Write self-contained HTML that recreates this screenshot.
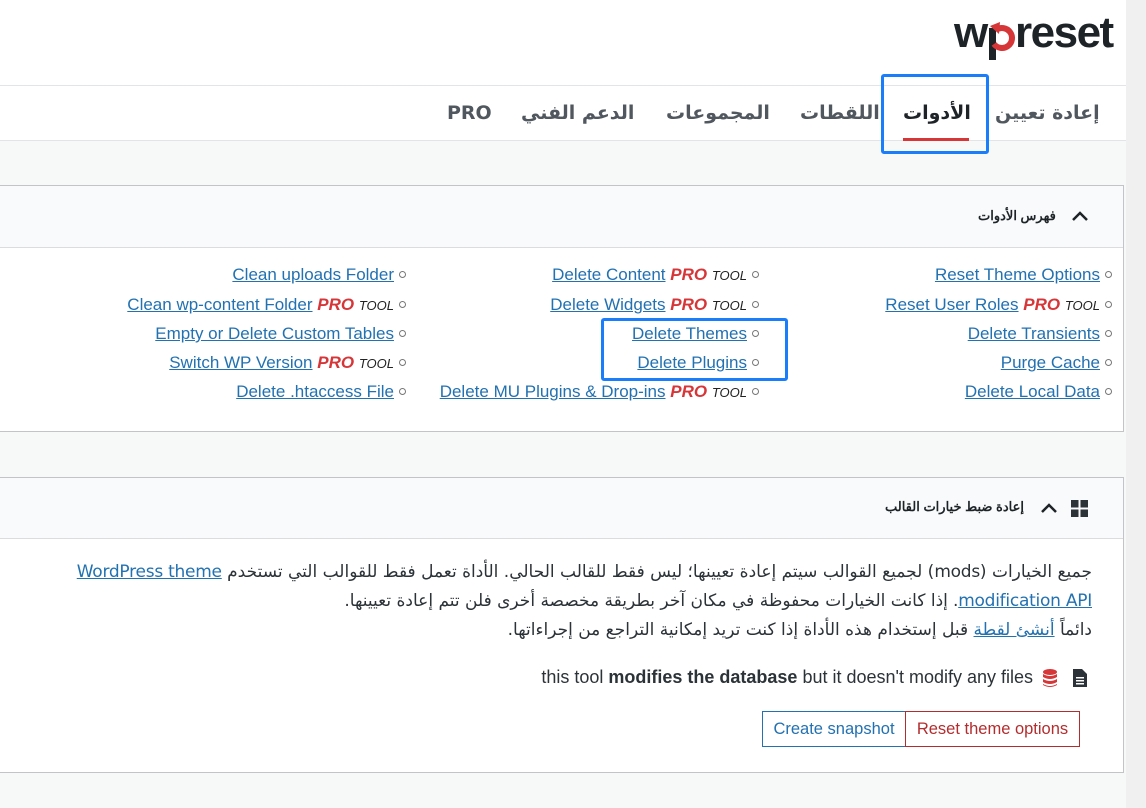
<!DOCTYPE html>
<html><head><meta charset="utf-8">
<style>
*{margin:0;padding:0;box-sizing:border-box}
body{width:1146px;height:808px;position:relative;overflow:hidden;background:#f7f8f8;font-family:"Liberation Sans","Noto Sans CJK SC",sans-serif;color:#2c3338}
.abs{position:absolute}
a{color:#2271b1;text-decoration:underline}
.strip{left:1126px;top:0;width:20px;height:808px;background:#f0f0f1}
.head{left:0;top:0;width:1126px;height:85px;background:#fff}
.tabs{left:0;top:85px;width:1126px;height:56px;background:#fff;border-top:1px solid #e2e4e7;border-bottom:1px solid #e2e4e7}
.tab{position:absolute;top:102px;font-size:19px;font-weight:bold;color:#50575e;white-space:nowrap;font-family:"DejaVu Sans","Liberation Sans",sans-serif}
.panel{left:0;width:1124px;background:#fff;border:1px solid #c3c4c7;border-left:none}
.ph{position:absolute;left:0;top:0;right:0;background:#f9fafb;border-bottom:1px solid #dcdcde}
.row{position:absolute;font-size:17px;white-space:nowrap;text-align:right;line-height:20px}
.row .b{display:inline-block;width:7px;height:7px;border:1px solid #777;border-radius:50%;margin-left:5px;vertical-align:2px}
.pro{color:#d63638;font-weight:bold;font-style:italic;text-decoration:none}
.tool{font-style:italic;font-size:13px;color:#222}
.p{position:absolute;right:54px;font-size:17px;white-space:nowrap;direction:rtl;color:#2c3338;font-family:"DejaVu Sans","Liberation Sans",sans-serif;letter-spacing:-0.25px}
.hl{position:absolute;border:3px solid #1a7efb;border-radius:3px}
.btn{position:absolute;top:711px;height:36px;font-size:16.5px;line-height:34px;text-align:center;background:#fff}
</style></head><body>
<div class="abs strip"></div>
<div class="abs head"></div>
<div class="abs" style="left:954px;top:8px;font-size:44px;font-weight:bold;color:#1d2327;letter-spacing:-1px;line-height:50px">w</div>
<div class="abs" style="left:1015px;top:8px;font-size:44px;font-weight:bold;color:#1d2327;letter-spacing:-1.5px;line-height:50px">reset</div>
<svg class="abs" style="left:986px;top:14px" width="34" height="46" viewBox="0 0 34 46"><rect x="3" y="14" width="7" height="32" fill="#1d2327"/><path d="M8 30 A10 10 0 1 0 10 16" stroke="#d63638" stroke-width="6" fill="none"/><path d="M4 12 L14 8 L13 20 Z" fill="#d63638"/></svg>
<div class="abs tabs"></div>
<div class="tab" style="left:995px">إعادة تعيين</div>
<div class="tab" style="left:903px;color:#1d2327">الأدوات</div>
<div class="abs" style="left:903px;top:138px;width:66px;height:3px;background:#d63638"></div>
<div class="tab" style="left:800px">اللقطات</div>
<div class="tab" style="left:666px">المجموعات</div>
<div class="tab" style="left:521px">الدعم الفني</div>
<div class="tab" style="left:447px">PRO</div>
<div class="hl" style="left:881px;top:74px;width:108px;height:80px"></div>

<div class="abs panel" style="top:185px;height:247px">
 <div class="ph" style="height:62px"></div>
</div>
<div class="abs" style="left:978px;top:208px;font-size:13px;font-weight:bold;color:#1d2327;direction:rtl">فهرس الأدوات</div>
<svg class="abs" style="left:1071px;top:210px" width="18" height="12"><path d="M2 10 L9 3 L16 10" stroke="#1d2327" stroke-width="2.5" fill="none"/></svg>

<div class="row" style="right:34px;top:265px"><a>Reset Theme Options</a><span class="b"></span></div>
<div class="row" style="right:34px;top:295px"><a>Reset User Roles</a> <span class="pro">PRO</span> <span class="tool">TOOL</span><span class="b"></span></div>
<div class="row" style="right:34px;top:324px"><a>Delete Transients</a><span class="b"></span></div>
<div class="row" style="right:34px;top:353px"><a>Purge Cache</a><span class="b"></span></div>
<div class="row" style="right:34px;top:382px"><a>Delete Local Data</a><span class="b"></span></div>

<div class="row" style="right:387px;top:265px"><a>Delete Content</a> <span class="pro">PRO</span> <span class="tool">TOOL</span><span class="b"></span></div>
<div class="row" style="right:387px;top:295px"><a>Delete Widgets</a> <span class="pro">PRO</span> <span class="tool">TOOL</span><span class="b"></span></div>
<div class="row" style="right:387px;top:324px"><a>Delete Themes</a><span class="b"></span></div>
<div class="row" style="right:387px;top:353px"><a>Delete Plugins</a><span class="b"></span></div>
<div class="row" style="right:387px;top:382px"><a>Delete MU Plugins &amp; Drop-ins</a> <span class="pro">PRO</span> <span class="tool">TOOL</span><span class="b"></span></div>

<div class="row" style="right:740px;top:265px"><a>Clean uploads Folder</a><span class="b"></span></div>
<div class="row" style="right:740px;top:295px"><a>Clean wp-content Folder</a> <span class="pro">PRO</span> <span class="tool">TOOL</span><span class="b"></span></div>
<div class="row" style="right:740px;top:324px"><a>Empty or Delete Custom Tables</a><span class="b"></span></div>
<div class="row" style="right:740px;top:353px"><a>Switch WP Version</a> <span class="pro">PRO</span> <span class="tool">TOOL</span><span class="b"></span></div>
<div class="row" style="right:740px;top:382px"><a>Delete .htaccess File</a><span class="b"></span></div>
<div class="hl" style="left:601px;top:318px;width:187px;height:63px"></div>

<div class="abs panel" style="top:477px;height:296px">
 <div class="ph" style="height:61px"></div>
</div>
<div class="abs" style="left:885px;top:499px;font-size:13px;font-weight:bold;color:#1d2327;direction:rtl">إعادة ضبط خيارات القالب</div>
<svg class="abs" style="left:1040px;top:502px" width="18" height="12"><path d="M2 10 L9 3 L16 10" stroke="#1d2327" stroke-width="2.5" fill="none"/></svg>
<svg class="abs" style="left:1071px;top:500px" width="17" height="17"><rect x="0" y="0" width="7.5" height="7.5" fill="#2c3338"/><rect x="9.5" y="0" width="7.5" height="7.5" fill="#2c3338"/><rect x="0" y="9.5" width="7.5" height="7.5" fill="#2c3338"/><rect x="9.5" y="9.5" width="7.5" height="7.5" fill="#2c3338"/></svg>

<div class="p" style="top:562px">جميع الخيارات (mods) لجميع القوالب سيتم إعادة تعيينها؛ ليس فقط للقالب الحالي. الأداة تعمل فقط للقوالب التي تستخدم <a>WordPress theme</a></div>
<div class="p" style="top:591px"><a>modification API</a>. إذا كانت الخيارات محفوظة في مكان آخر بطريقة مخصصة أخرى فلن تتم إعادة تعيينها.</div>
<div class="p" style="top:620px">دائماً <a>أنشئ لقطة</a> قبل إستخدام هذه الأداة إذا كنت تريد إمكانية التراجع من إجراءاتها.</div>

<div class="abs" style="right:113px;top:667px;font-size:18px;white-space:nowrap;color:#2c3338">this tool <b>modifies the database</b> but it doesn't modify any files</div>
<svg class="abs" style="left:1042px;top:668px" width="16" height="20" viewBox="0 0 16 20"><ellipse cx="8" cy="4" rx="7" ry="3" fill="#d63638"/><path d="M1 6 Q8 10 15 6 V9 Q8 13 1 9Z" fill="#d63638"/><path d="M1 11 Q8 15 15 11 V14 Q8 18 1 14Z" fill="#d63638"/><path d="M1 16 Q8 20 15 16 V17 Q8 21 1 17Z" fill="#d63638"/></svg>
<svg class="abs" style="left:1073px;top:669px" width="14" height="18" viewBox="0 0 14 18"><path d="M0 0 H9 L14 5 V18 H0Z" fill="#2c3338"/><rect x="3" y="8" width="8" height="1.5" fill="#fff"/><rect x="3" y="11" width="8" height="1.5" fill="#fff"/><rect x="3" y="14" width="8" height="1.5" fill="#fff"/></svg>

<div class="btn" style="left:762px;width:144px;border:1px solid #2271b1;color:#2271b1">Create snapshot</div>
<div class="btn" style="left:905px;width:175px;border:1px solid #b32d2e;color:#b32d2e">Reset theme options</div>
</body></html>
